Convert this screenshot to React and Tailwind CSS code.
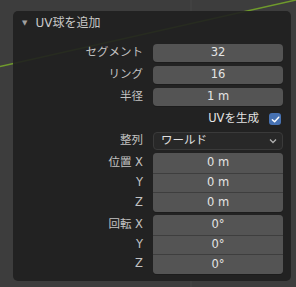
const font = { fontFamily: '"DejaVu Sans", "Noto Sans CJK JP", sans-serif' };

const fields = [
  { label: "セグメント", value: "32" },
  { label: "リング", value: "16" },
  { label: "半径", value: "1 m" },
];

const location = [
  { label: "位置 X", value: "0 m" },
  { label: "Y", value: "0 m" },
  { label: "Z", value: "0 m" },
];

const rotation = [
  { label: "回転 X", value: "0°" },
  { label: "Y", value: "0°" },
  { label: "Z", value: "0°" },
];

function Label({ children }) {
  return (
    <div className="w-[131px] shrink-0 pr-[1px] text-right text-[11.5px] text-[#c2c2c2]">
      {children}
    </div>
  );
}

function FieldRow({ label, value }) {
  return (
    <div className="flex h-[22px] items-center gap-[9px]">
      <Label>{label}</Label>
      <div className="flex h-[18px] w-[130px] items-center justify-center rounded-[4px] bg-[#545454] text-[11.5px] text-[#e4e4e4] shadow-[0_1px_0_#1c1c1c]">
        {value}
      </div>
    </div>
  );
}

function Group({ rows }) {
  return (
    <div className="flex gap-[9px]">
      <div className="flex flex-col">
        {rows.map((r) => (
          <div key={r.label} className="flex h-[19.67px] items-center">
            <Label>{r.label}</Label>
          </div>
        ))}
      </div>
      <div className="flex w-[130px] flex-col overflow-hidden rounded-[4px] bg-[#3c3c3c] shadow-[0_1px_0_#1c1c1c]">
        {rows.map((r, i) => (
          <div
            key={r.label}
            className={`flex h-[19.67px] items-center justify-center bg-[#545454] text-[11.5px] text-[#e4e4e4] ${i > 0 ? "border-t border-[#3e3e3e]" : ""}`}
          >
            {r.value}
          </div>
        ))}
      </div>
    </div>
  );
}

export default function App() {
  return (
    <div className="relative h-[287px] w-[296px] overflow-hidden bg-[#3d3d3d]" style={font}>
      <svg className="absolute inset-0" width="296" height="287">
        <line x1="191" y1="0" x2="191" y2="287" stroke="#464646" strokeWidth="1" />
        <line x1="0" y1="66.5" x2="296" y2="0" stroke="#6f9a2c" strokeWidth="1.5" />
      </svg>

      <div className="relative pl-[13px] pt-[11px]">
        <div className="h-[270px] w-[278px] rounded-[5px] bg-[#1f1f1f]/90">
          <div className="flex h-[24px] items-center pl-[9px] text-[12px] text-[#c8c8c8]">
            <span className="mr-[8px] text-[7px] text-[#a0a0a0]">▼</span>
            UV球を追加
          </div>

          <div className="flex flex-col pt-[7px]">
            {fields.map((f) => (
              <FieldRow key={f.label} {...f} />
            ))}

            <div className="flex h-[22px] items-center justify-end pr-[10px] text-[11.5px] text-[#e4e4e4]">
              <span className="mr-[10px]">UVを生成</span>
              <span className="flex h-[12px] w-[12px] items-center justify-center rounded-[3px] bg-[#4772b3]">
                <svg width="9" height="9" viewBox="0 0 10 10">
                  <path d="M1.5 5.2 L4 7.6 L8.6 2.4" fill="none" stroke="#fff" strokeWidth="1.6" strokeLinecap="round" strokeLinejoin="round" />
                </svg>
              </span>
            </div>

            <div className="flex h-[22px] items-center gap-[9px]">
              <Label>整列</Label>
              <div className="flex h-[18px] w-[130px] items-center justify-between rounded-[4px] border border-[#3a3a3a] bg-[#282828] pl-[7px] pr-[5px] text-[11.5px] text-[#e0e0e0]">
                <span>ワールド</span>
                <svg width="8" height="6" viewBox="0 0 8 6">
                  <path d="M1 1.5 L4 4.5 L7 1.5" fill="none" stroke="#b0b0b0" strokeWidth="1.3" />
                </svg>
              </div>
            </div>

            <div className="mt-[1px]">
              <Group rows={location} />
            </div>
            <div className="mt-[3px]">
              <Group rows={rotation} />
            </div>
          </div>
        </div>
      </div>
    </div>
  );
}
